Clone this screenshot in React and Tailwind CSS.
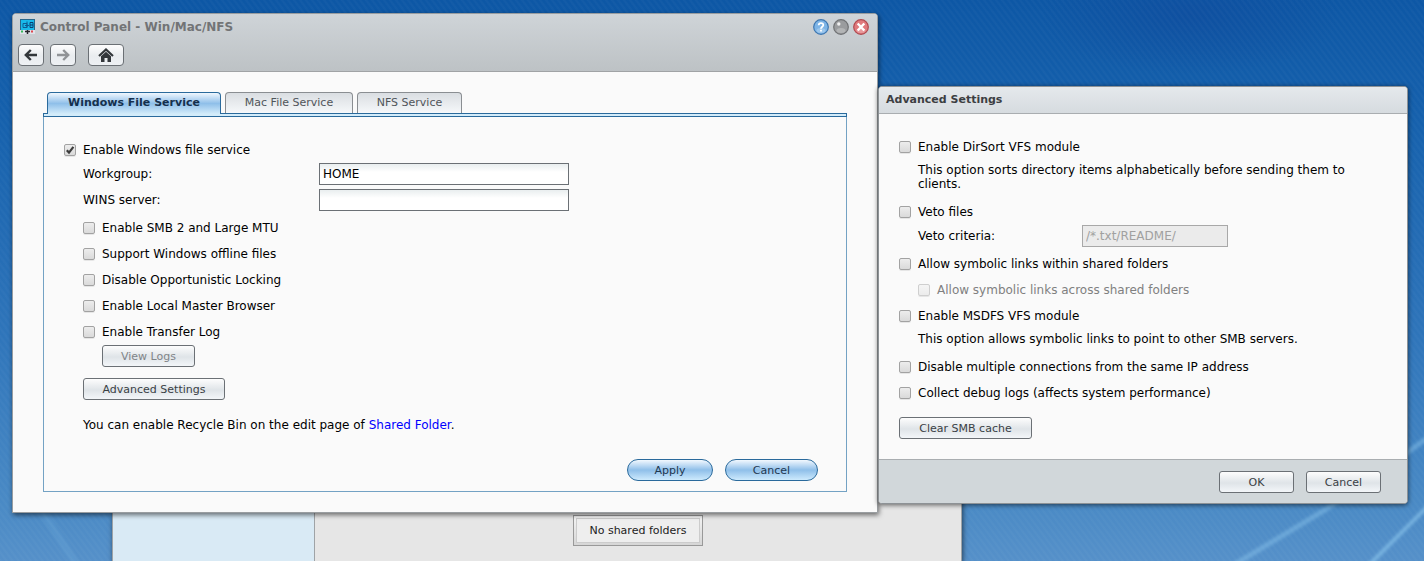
import React from 'react';

const Check = ({ id, label, defaultChecked, disabled }) => (
  <div className="flex h-[26px] items-center gap-[7px]">
    <span className="relative block size-3">
      <input
        id={id}
        type="checkbox"
        defaultChecked={defaultChecked}
        disabled={disabled}
        className="peer block size-3 appearance-none rounded-[2px] border border-[#a2a2a2] bg-linear-to-b from-[#ededed] to-[#dadada] shadow-[0_1px_0_rgba(0,0,0,0.08)] disabled:border-[#cfcfcf] disabled:from-[#f5f5f5] disabled:to-[#ececec]"
      />
      <svg viewBox="0 0 12 12" className="pointer-events-none absolute inset-0 hidden size-3 peer-checked:block">
        <path d="M2.8 6.2 L5 8.6 L9.4 2.8" fill="none" stroke="#3c3c3c" strokeWidth="2.2" />
      </svg>
    </span>
    <label htmlFor={id} className={disabled ? 'text-[#808080]' : ''}>{label}</label>
  </div>
);

const Button = ({ children, className = '', disabled }) => (
  <button
    disabled={disabled}
    className={`flex h-[22px] items-center justify-center rounded-[3px] border border-[#6b7075] bg-linear-to-b from-[#fdfdfd] via-[#dfe4e8] via-55% to-[#f3f6f9] pt-[2px] text-[11px] text-[#3a3f45] disabled:text-[#808488] ${className}`}
  >
    {children}
  </button>
);

const NavButton = ({ label, children, className = '' }) => (
  <button
    aria-label={label}
    className={`flex h-[22px] items-center justify-center rounded-[4px] border border-[#6b7075] bg-linear-to-b from-[#fdfdfd] via-[#e9ecef] via-55% to-[#eef1f4] ${className}`}
  >
    {children}
  </button>
);

const BlueButton = ({ children, className = '' }) => (
  <button
    className={`flex h-[22px] items-center justify-center rounded-full border border-[#2a6a9c] bg-linear-to-b from-[#f2f8fe] via-[#8fbfe9] via-50% to-[#cdeafd] pt-[2px] text-[11px] text-[#1f3850] ${className}`}
  >
    {children}
  </button>
);

const Field = ({ id, label, defaultValue = '' }) => (
  <div className="flex h-[26px] items-start">
    <label htmlFor={id} className="w-[236px] leading-[22px]">{label}</label>
    <input
      id={id}
      type="text"
      defaultValue={defaultValue}
      className="h-[22px] w-[250px] border border-[#6b7075] bg-white bg-linear-to-b from-[#e9eeef] to-white to-40% px-[3px] outline-none"
    />
  </div>
);

const Wallpaper = () => (
  <svg className="absolute inset-0 size-full" viewBox="0 0 1424 561" preserveAspectRatio="none">
    <defs>
      <linearGradient id="sky" x1="0" y1="0" x2="0" y2="1">
        <stop offset="0" stopColor="#0d57a5" />
        <stop offset="0.2" stopColor="#1560ac" />
        <stop offset="0.6" stopColor="#2f75ba" />
        <stop offset="0.9" stopColor="#4a8ac5" />
        <stop offset="1" stopColor="#5590c9" />
      </linearGradient>
      <radialGradient id="deep">
        <stop offset="0" stopColor="#0f4a9c" stopOpacity="0.6" />
        <stop offset="1" stopColor="#0f4a9c" stopOpacity="0" />
      </radialGradient>
      <pattern id="weave" width="6" height="8" patternUnits="userSpaceOnUse">
        <path d="M-3 -4 L9 12 M-9 -4 L3 12 M3 -4 L15 12" stroke="#ffffff" strokeOpacity="0.025" strokeWidth="2" />
      </pattern>
      <filter id="soft" x="-20%" y="-20%" width="140%" height="140%">
        <feGaussianBlur stdDeviation="1.5" />
      </filter>
    </defs>
    <rect width="1424" height="561" fill="url(#sky)" />
    <ellipse cx="1190" cy="15" rx="150" ry="60" fill="url(#deep)" />
    <rect width="1424" height="561" fill="url(#weave)" />
    <g fill="none" stroke="#86c0ea" filter="url(#soft)">
      <path d="M1222 572 L1325 510 L1408 452 L1434 433" strokeWidth="5" strokeOpacity="0.5" />
      <path d="M1362 572 L1434 500" strokeWidth="4" strokeOpacity="0.7" />
      <path d="M40 508 L80 570" strokeWidth="7" strokeOpacity="0.15" />
    </g>
  </svg>
);

const WindowIcon = () => (
  <svg className="size-4" viewBox="0 0 16 16">
    <rect x="0.5" y="0.5" width="14" height="11" fill="#18b9ea" stroke="#27678c" />
    <path d="M3 4.500h4v4H3z M7 2.500v6 M5 6.500h4" fill="none" stroke="#0d5c92" />
    <path d="M10 3.500h3v5h-3z M10 6h3" fill="none" stroke="#0a3f73" />
    <rect y="11" width="15" height="4" fill="#dfe3ea" />
    <path d="M1 12.500h2" stroke="#35b857" strokeWidth="2" />
    <path d="M5 12.500h5 M7.500 11v4" stroke="#26252b" strokeWidth="1.500" />
    <path d="M11 12.500h2" stroke="#e0474f" strokeWidth="2" />
  </svg>
);

const tools = [
  { label: 'Help', ring: '#3d76b0', fill: '#7db4e6' },
  { label: 'Minimize', ring: '#707274', fill: '#9a9c9e' },
  { label: 'Close', ring: '#b04a50', fill: '#e07a7d' },
];

const ToolIcon = ({ tool }) => (
  <svg className="size-4" viewBox="0 0 16 16">
    <circle cx="8" cy="8" r="7.3" fill={tool.fill} stroke={tool.ring} strokeWidth="1.2" />
    <ellipse cx="8" cy="11.500" rx="4.500" ry="2.500" fill="#ffffff" fillOpacity="0.25" />
    {tool.label === 'Help' && (
      <g fill="none" stroke="#ffffff" strokeWidth="1.800">
        <path d="M5.700 6.300 C5.700 3.400 10.300 3.500 10.300 6 C10.300 7.700 8 7.700 8 9.700" />
        <path d="M8 10.700 V12.500" />
      </g>
    )}
    {tool.label === 'Minimize' && <circle cx="5.800" cy="5" r="1.700" fill="#f0f0f0" />}
    {tool.label === 'Close' && <path d="M4.700 4.500 L11.300 11.500 M11.300 4.500 L4.700 11.500" stroke="#ffffff" strokeWidth="2.400" />}
  </svg>
);

const Arrow = ({ color, flip }) => (
  <svg className={flip ? 'h-3 w-[14px] rotate-180' : 'h-3 w-[14px]'} viewBox="0 0 14 12">
    <path d="M6.800 1 L1.800 6 L6.800 11 M2 6 H13" fill="none" stroke={color} strokeWidth="2.400" />
  </svg>
);

const options = ['Enable SMB 2 and Large MTU', 'Support Windows offline files', 'Disable Opportunistic Locking', 'Enable Local Master Browser', 'Enable Transfer Log'];

const ControlPanel = () => (
  <section className="absolute top-[13px] left-3 w-[866px] rounded-t-[4px] border border-[#999da0] bg-[#fafafa] shadow-[1px_2px_5px_rgba(0,0,0,0.55)]">
    <header className="h-[58px] rounded-t-[3px] border-b border-[#a0a3a5] bg-linear-to-b from-[#cfd4d8] to-[#bdc2c5] px-[5px]">
      <div className="flex h-[26px] items-center gap-1 pl-[2px]">
        <WindowIcon />
        <h1 className="flex-1 text-[12px] font-bold text-[#727476]">Control Panel - Win/Mac/NFS</h1>
        <div className="flex gap-1 pr-[3px]">
          {tools.map((tool) => (
            <button key={tool.label} aria-label={tool.label}>
              <ToolIcon tool={tool} />
            </button>
          ))}
        </div>
      </div>
      <nav className="mt-1 flex">
        <NavButton label="Back" className="w-[26px]"><Arrow color="#33373b" /></NavButton>
        <NavButton label="Forward" className="ml-[6px] w-[26px]"><Arrow color="#909396" flip /></NavButton>
        <NavButton label="Home" className="ml-3 w-9">
          <svg className="h-[14px] w-4" viewBox="0 0 16 14">
            <path d="M1 8 L8 1.500 L15 8" fill="none" stroke="#33373b" strokeWidth="2.200" />
            <path d="M3 8.200 L8 3.800 L13 8.200 V14 H9.500 V10 H6.500 V14 H3 Z" fill="#33373b" />
          </svg>
        </NavButton>
      </nav>
    </header>

    <div className="px-[30px] py-5">
      <div role="tablist" className="flex h-[21px] gap-1 pl-1 text-[11px] text-[#50555a]">
        <button role="tab" aria-selected="true" className="relative z-10 h-[22px] w-[174px] rounded-t-[4px] border border-b-0 border-[#2a6a9c] bg-linear-to-b from-[#f0f7fe] via-[#8fbfe9] via-50% to-[#d3ecfa] font-bold text-[#15304d]">
          Windows File Service
        </button>
        <button role="tab" className="w-32 rounded-t-[4px] border border-b-0 border-[#8a8e92] bg-linear-to-b from-[#dadee2] to-[#f6f8fa] pt-px">Mac File Service</button>
        <button role="tab" className="w-[105px] rounded-t-[4px] border border-b-0 border-[#8a8e92] bg-linear-to-b from-[#dadee2] to-[#f6f8fa] pt-px">NFS Service</button>
      </div>
      <div className="h-1 border border-[#2a6a9c] bg-[#d3ecfa]" />
      <div className="border border-t-0 border-[#73a2c4] px-5 pt-5 pb-[10px]">
        <Check id="wfs" label="Enable Windows file service" defaultChecked />
        <div className="pl-[19px]">
          <Field id="workgroup" label="Workgroup:" defaultValue="HOME" />
          <Field id="wins" label="WINS server:" />
          {options.map((option, index) => (
            <Check key={option} id={`opt-${index}`} label={option} />
          ))}
          <Button disabled className="ml-[19px] w-[93px]">View Logs</Button>
          <Button className="mt-[11px] w-[142px]">Advanced Settings</Button>
          <p className="mt-3 leading-[26px]">
            You can enable Recycle Bin on the edit page of <a href="#shared" className="text-[#0000ff]">Shared Folder</a>.
          </p>
        </div>
        <div className="mt-[21px] flex justify-end gap-3 pr-2">
          <BlueButton className="w-[86px]">Apply</BlueButton>
          <BlueButton className="w-[93px]">Cancel</BlueButton>
        </div>
      </div>
    </div>
  </section>
);

const AdvancedSettings = () => (
  <section className="absolute top-[86px] left-[878px] w-[530px] rounded-[4px] border border-[#8d9296] bg-[#fafafa] shadow-[0_1px_5px_rgba(0,0,0,0.6)]">
    <header className="flex h-[27px] items-center rounded-t-[3px] border-b border-[#a9adb0] bg-linear-to-b from-[#e5e9ec] to-[#d6dbdf] px-[7px]">
      <h2 className="text-[11px] font-bold text-[#3c3e42]">Advanced Settings</h2>
    </header>
    <div className="px-5 py-5">
      <Check id="dirsort" label="Enable DirSort VFS module" />
      <p className="pt-[3px] pb-2 pl-[19px] leading-[14px]">
        This option sorts directory items alphabetically before sending them to clients.
      </p>
      <Check id="veto" label="Veto files" />
      <div className="flex h-[26px] items-start pl-[19px]">
        <label htmlFor="criteria" className="w-[164px] leading-[22px]">Veto criteria:</label>
        <input id="criteria" type="text" disabled defaultValue="/*.txt/README/" className="h-[22px] w-[146px] border border-[#a8a8a8] bg-[#ebebeb] px-[3px] text-[#a0a0a0]" />
      </div>
      <Check id="links" label="Allow symbolic links within shared folders" />
      <div className="pl-[19px]">
        <Check id="across" label="Allow symbolic links across shared folders" disabled />
      </div>
      <Check id="msdfs" label="Enable MSDFS VFS module" />
      <p className="pt-[3px] pb-2 pl-[19px] leading-[14px]">This option allows symbolic links to point to other SMB servers.</p>
      <Check id="multi" label="Disable multiple connections from the same IP address" />
      <Check id="debug" label="Collect debug logs (affects system performance)" />
      <Button className="mt-[11px] w-[133px]">Clear SMB cache</Button>
    </div>
    <footer className="flex justify-end gap-3 rounded-b-[3px] border-t border-[#a9adb0] bg-[#d1d7da] pt-[11px] pr-[26px] pb-[10px]">
      <Button className="w-[75px]">OK</Button>
      <Button className="w-[75px]">Cancel</Button>
    </footer>
  </section>
);

const FileBrowser = () => (
  <section className="absolute top-[120px] bottom-0 left-28 flex w-[850px] border-x border-[#9fa3a6] bg-[#e6e6e6] shadow-[1px_2px_5px_rgba(0,0,0,0.55)]">
    <aside className="w-[202px] border-r border-[#9fa3a6] bg-[#d9eaf5]" />
    <div className="flex flex-1 items-end justify-center pb-[15px]">
      <div className="border border-[#999999] bg-linear-to-b from-[#f4f4f4] to-[#d6d6d6] p-[2px]">
        <p className="border border-[#cccccc] bg-[#eeeeee] px-3 text-[11px] leading-[23px] text-[#222222]">No shared folders</p>
      </div>
    </div>
  </section>
);

const App = () => (
  <main className="relative h-screen min-h-[561px] overflow-hidden font-['DejaVu_Sans',Verdana,sans-serif] text-[12px] text-black">
    <Wallpaper />
    <FileBrowser />
    <ControlPanel />
    <AdvancedSettings />
  </main>
);

export default App;
